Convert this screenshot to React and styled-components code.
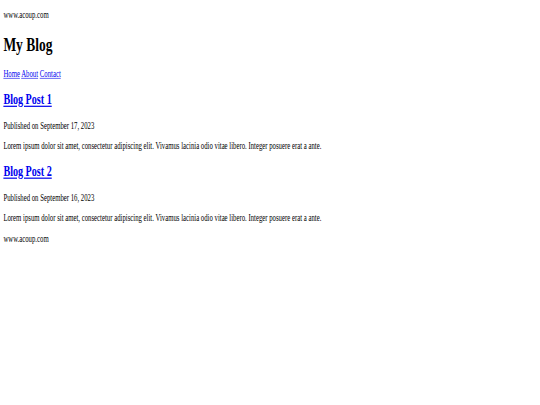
import React from "react";
import styled, { createGlobalStyle } from "styled-components";

const GlobalStyle = createGlobalStyle`
    html, body {
        margin: 0;
        background: #ffffff;
    }
    body {
        font-family: "Liberation Serif", "Times New Roman", serif;
        font-size: 16px;
        color: #000000;
        overflow: hidden;
    }
`;

const posts = [
    { title: "Blog Post 1", date: "September 17, 2023" },
    { title: "Blog Post 2", date: "September 16, 2023" },
];

const lorem =
    "Lorem ipsum dolor sit amet, consectetur adipiscing elit. Vivamus lacinia odio vitae libero. Integer posuere erat a ante.";

const App = () => {
    return <>
        <GlobalStyle />
        <Scaler>
            <Page>
                <Header>
                    <Text>www.acoup.com</Text>
                    <Title>My Blog</Title>
                    <Nav>
                        <Link href="#">Home</Link> <Link href="#">About</Link>{" "}
                        <Link href="#">Contact</Link>
                    </Nav>
                </Header>
                <main>
                    {posts.map((post) => (
                        <article key={post.title}>
                            <PostTitle>
                                <Link href="#">{post.title}</Link>
                            </PostTitle>
                            <Text>Published on {post.date}</Text>
                            <Text>{lorem}</Text>
                        </article>
                    ))}
                </main>
                <footer>
                    <Text>www.acoup.com</Text>
                </footer>
            </Page>
        </Scaler>
    </>
}

export default App;

const Scaler = styled.div`
    width: 1280px;
    transform: scale(0.4219, 0.604);
    transform-origin: 0 0;
`

const Page = styled.div`
    display: flow-root;
    padding: 0 8px;
`

const Header = styled.header`
    display: block;
`

const Text = styled.p`
    margin: 16px 0;
    line-height: normal;
`

const Title = styled.h1`
    font-size: 32px;
    margin: 21.44px 0;
    font-weight: bold;
`

const Nav = styled.nav`
    display: block;
`

const PostTitle = styled.h2`
    font-size: 24px;
    margin: 19.92px 0;
    font-weight: bold;
`

const Link = styled.a`
    color: #0000ee;
    text-decoration: underline;
`
